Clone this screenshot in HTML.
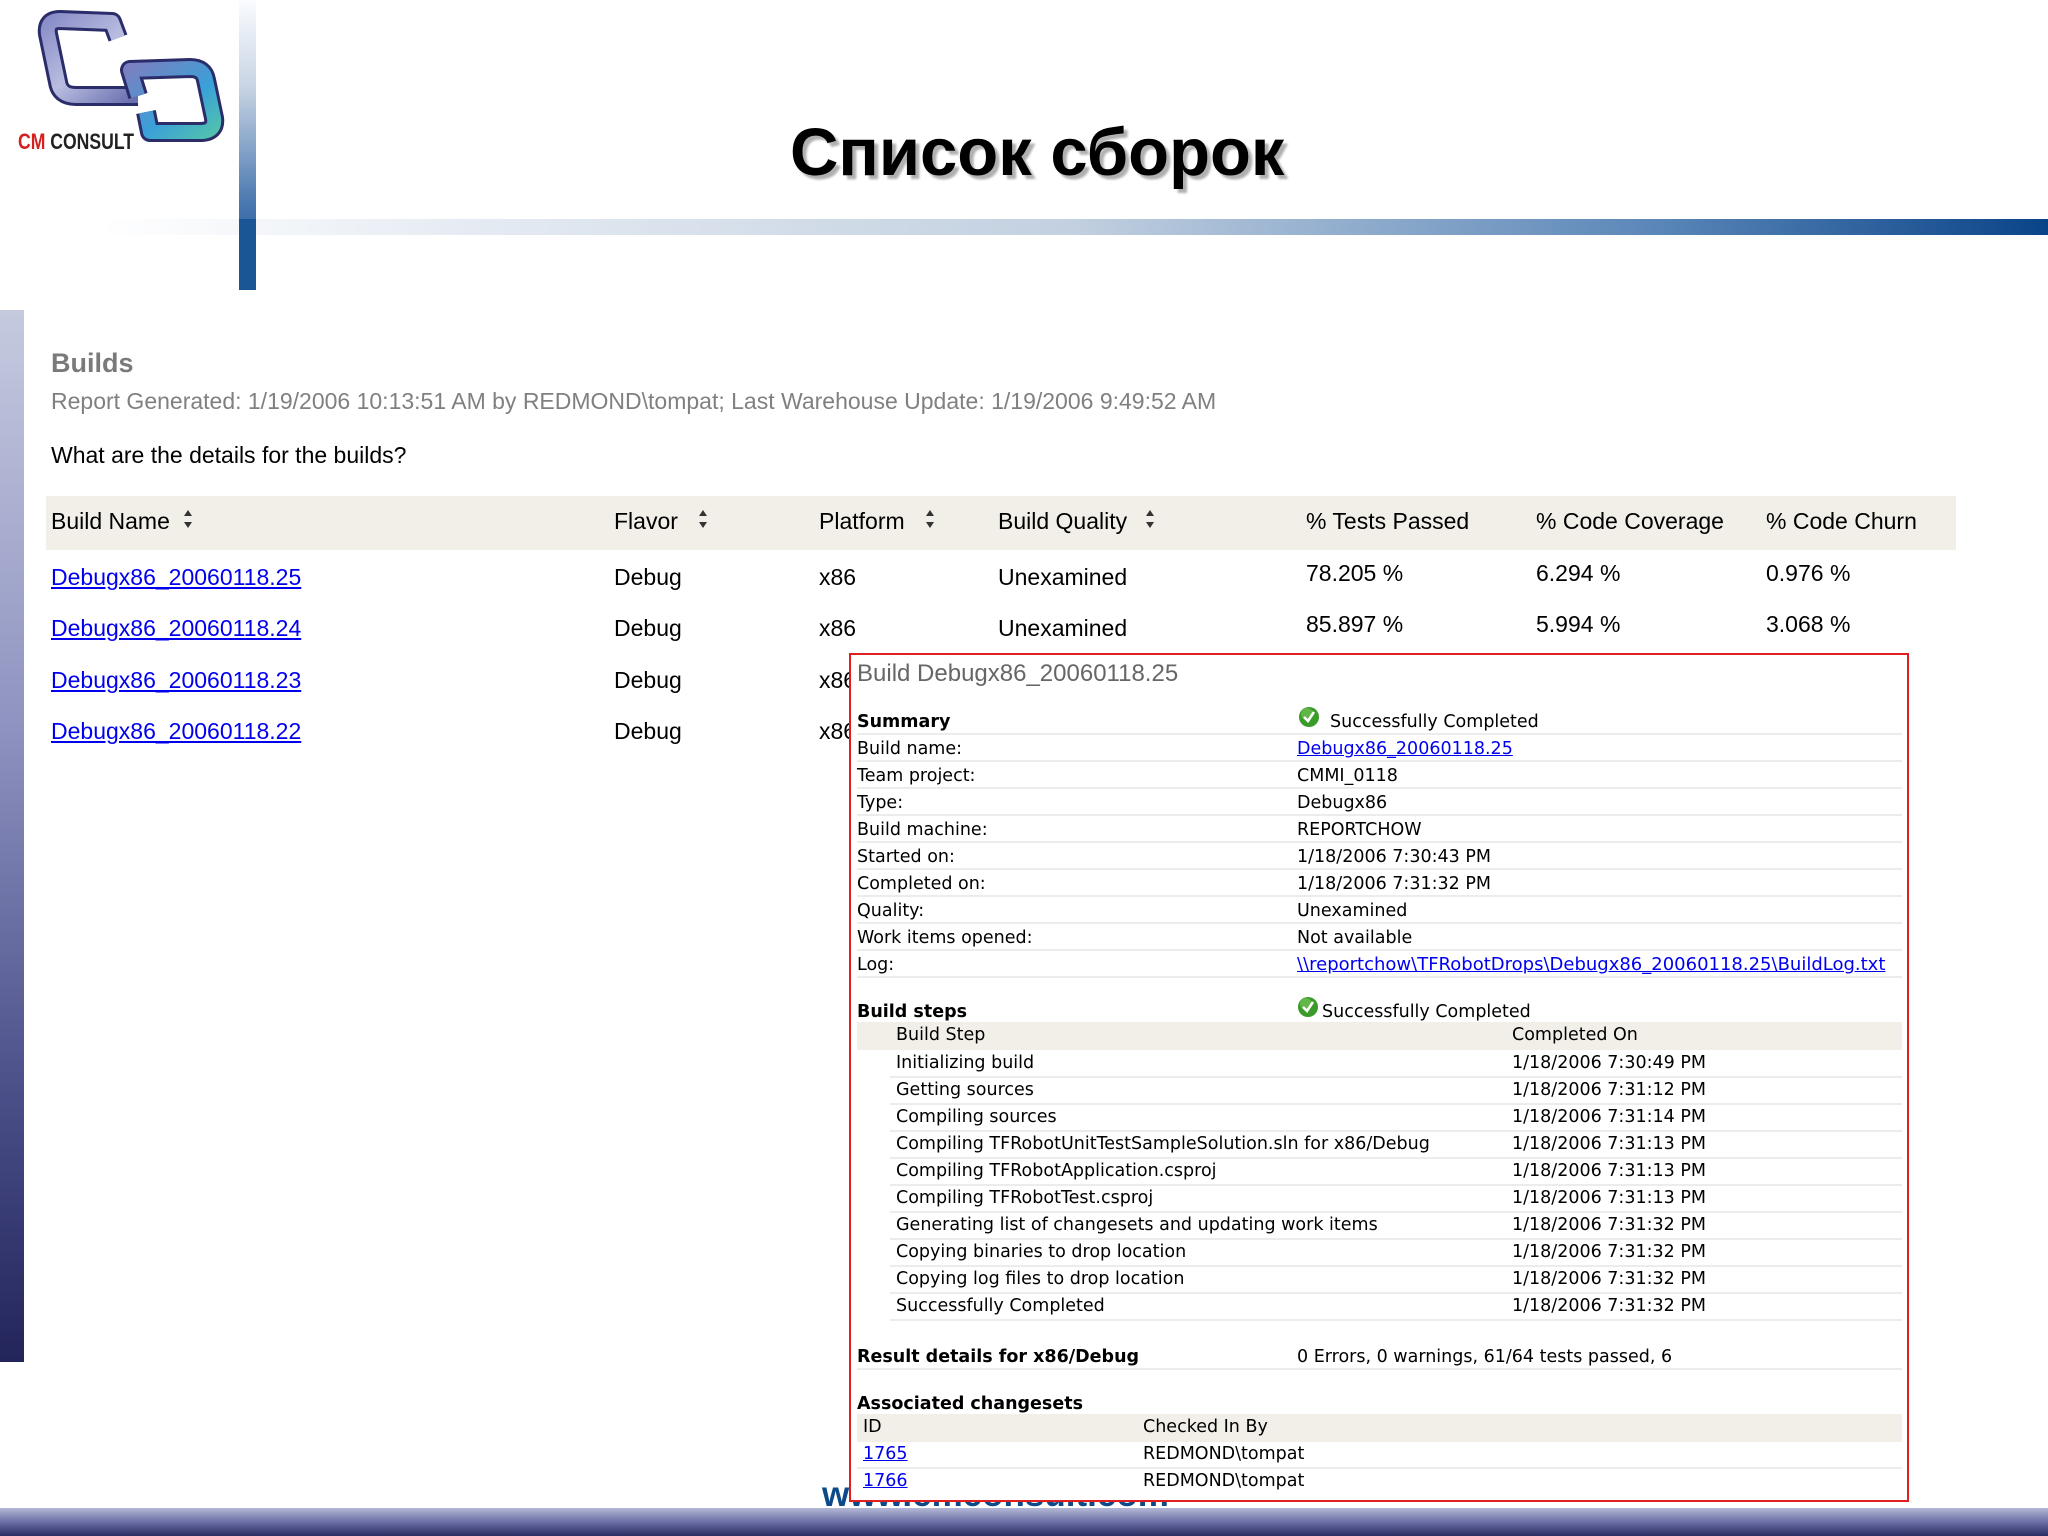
<!DOCTYPE html>
<html><head><meta charset="utf-8">
<style>
html,body{margin:0;padding:0}
body{width:2048px;height:1536px;position:relative;overflow:hidden;background:#fff;font-family:"Liberation Sans",sans-serif}
.a{position:absolute;white-space:nowrap}
.t{font-size:23px;color:#000;line-height:30px}
.lnk{color:#0000ee;text-decoration:underline}
.p{font-family:"DejaVu Sans",sans-serif;font-size:17.5px;line-height:22px;color:#000}
.p .lnk{color:#0000ee}
.sep{position:absolute;height:2px;background:#ececec}
.arr{position:absolute;width:10px;height:22px}
</style></head><body>

<svg class="a" style="left:0;top:0" width="240" height="170" viewBox="0 0 240 170">
<defs>
<linearGradient id="g1" x1="0" y1="0" x2="1" y2="1"><stop offset="0" stop-color="#8a8ec8"/><stop offset="0.5" stop-color="#b9bde0"/><stop offset="1" stop-color="#6a6fb0"/></linearGradient>
<linearGradient id="g2" x1="0" y1="0" x2="1" y2="1"><stop offset="0" stop-color="#7a80c0"/><stop offset="0.6" stop-color="#3aa0d8"/><stop offset="1" stop-color="#50c0b0"/></linearGradient>
</defs>
<path d="M118 38 L112 22 L60 20 Q46 20 48 34 L58 82 Q60 96 76 96 L138 96" fill="none" stroke="#2a2d6a" stroke-width="20" stroke-linejoin="round"/>
<path d="M118 38 L112 22 L60 20 Q46 20 48 34 L58 82 Q60 96 76 96 L138 96" fill="none" stroke="url(#g1)" stroke-width="14" stroke-linejoin="round"/>
<path d="M138 96 L130 70 L190 68 Q204 68 206 80 L214 118 Q216 132 200 132 L150 132 L146 112" fill="none" stroke="#2a2d6a" stroke-width="20" stroke-linejoin="round"/>
<path d="M138 96 L130 70 L190 68 Q204 68 206 80 L214 118 Q216 132 200 132 L150 132 L146 112" fill="none" stroke="url(#g2)" stroke-width="14" stroke-linejoin="round"/>
</svg>
<div class="a" style="left:18px;top:130px;font-size:22px;font-weight:bold;line-height:24px;transform:scaleX(0.8);transform-origin:left"><span style="color:#d42020">CM</span> <span style="color:#222">CONSULT</span></div>

<div class="a" style="left:239px;top:0;width:17px;height:290px;background:linear-gradient(#fafcfe,#c8d4e4 30%,#4a78b0 70%,#0f4a90)"></div>
<div class="a" style="left:100px;top:219px;width:1948px;height:16px;background:linear-gradient(90deg,#ffffff,#e4eaf2 20%,#c2d0e0 50%,#5a86b8 80%,#0a4488)"></div>
<div class="a" style="left:239px;top:219px;width:17px;height:71px;background:#1a5596"></div>

<div class="a" style="left:790px;top:115px;font-size:67px;font-weight:bold;line-height:76px;color:#000;text-shadow:4px 4px 2px #b0b0b0">Список сборок</div>

<div class="a" style="left:0;top:310px;width:24px;height:1052px;background:linear-gradient(#c6cadf,#8d92c0 40%,#4a4e88 75%,#22245a)"></div>

<div class="a" style="left:51px;top:346px;font-size:27px;font-weight:bold;color:#7a7a7a;line-height:34px">Builds</div>
<div class="a" style="left:51px;top:387px;font-size:23px;color:#808080;line-height:28px">Report Generated: 1/19/2006 10:13:51 AM by REDMOND\tompat; Last Warehouse Update: 1/19/2006 9:49:52 AM</div>
<div class="a t" style="left:51px;top:440px">What are the details for the builds?</div>

<div class="a" style="left:46px;top:496px;width:1910px;height:54px;background:#f1efe7"></div>
<div class="a t" style="left:51px;top:506px">Build Name</div>
<div class="a t" style="left:614px;top:506px">Flavor</div>
<div class="a t" style="left:819px;top:506px">Platform</div>
<div class="a t" style="left:998px;top:506px">Build Quality</div>
<div class="a t" style="left:1306px;top:506px">% Tests Passed</div>
<div class="a t" style="left:1536px;top:506px">% Code Coverage</div>
<div class="a t" style="left:1766px;top:506px">% Code Churn</div>
<svg class="arr" style="left:183px;top:508px" viewBox="0 0 10 22"><path d="M5 2 L9 8 L1 8Z M5 20 L9 14 L1 14Z" fill="#333"/></svg>
<svg class="arr" style="left:698px;top:508px" viewBox="0 0 10 22"><path d="M5 2 L9 8 L1 8Z M5 20 L9 14 L1 14Z" fill="#333"/></svg>
<svg class="arr" style="left:925px;top:508px" viewBox="0 0 10 22"><path d="M5 2 L9 8 L1 8Z M5 20 L9 14 L1 14Z" fill="#333"/></svg>
<svg class="arr" style="left:1145px;top:508px" viewBox="0 0 10 22"><path d="M5 2 L9 8 L1 8Z M5 20 L9 14 L1 14Z" fill="#333"/></svg>

<div class="a t lnk" style="left:51px;top:562px">Debugx86_20060118.25</div>
<div class="a t lnk" style="left:51px;top:613px">Debugx86_20060118.24</div>
<div class="a t lnk" style="left:51px;top:665px">Debugx86_20060118.23</div>
<div class="a t lnk" style="left:51px;top:716px">Debugx86_20060118.22</div>
<div class="a t" style="left:614px;top:562px">Debug</div>
<div class="a t" style="left:614px;top:613px">Debug</div>
<div class="a t" style="left:614px;top:665px">Debug</div>
<div class="a t" style="left:614px;top:716px">Debug</div>
<div class="a t" style="left:819px;top:562px">x86</div>
<div class="a t" style="left:819px;top:613px">x86</div>
<div class="a t" style="left:819px;top:665px">x86</div>
<div class="a t" style="left:819px;top:716px">x86</div>
<div class="a t" style="left:998px;top:562px">Unexamined</div>
<div class="a t" style="left:998px;top:613px">Unexamined</div>
<div class="a t" style="left:1306px;top:558px">78.205 %</div>
<div class="a t" style="left:1536px;top:558px">6.294 %</div>
<div class="a t" style="left:1766px;top:558px">0.976 %</div>
<div class="a t" style="left:1306px;top:609px">85.897 %</div>
<div class="a t" style="left:1536px;top:609px">5.994 %</div>
<div class="a t" style="left:1766px;top:609px">3.068 %</div>

<div class="a" style="left:822px;top:1474px;font-size:35px;font-weight:bold;color:#0d4a8a;line-height:42px">www.cmconsult.com</div>

<div class="a" style="left:0;top:1508px;width:2048px;height:28px;background:linear-gradient(#b4b8d6,#6a6ea4 50%,#2a2c62)"></div>

<div class="a" style="left:849px;top:653px;width:1056px;height:845px;border:2px solid #e02020;background:#fff"></div>
<div class="a" style="left:857px;top:659px;font-size:24px;color:#666;line-height:30px">Build Debugx86_20060118.25</div>

<div class="a p" style="left:857px;top:711px;font-weight:bold">Summary</div>
<svg class="a" style="left:1298px;top:706px" width="22" height="22" viewBox="0 0 22 22"><circle cx="11" cy="11" r="10" fill="#3a9a2a"/><circle cx="9" cy="8" r="6" fill="#7ccc5c" opacity=".6"/><path d="M6 11 L10 15 L16 6" fill="none" stroke="#fff" stroke-width="2.5"/></svg>
<div class="a p" style="left:1330px;top:711px">Successfully Completed</div>

<div class="a p" style="left:857px;top:738px">Build name:</div><div class="a p" style="left:1297px;top:738px"><span class="lnk">Debugx86_20060118.25</span></div>
<div class="a p" style="left:857px;top:765px">Team project:</div><div class="a p" style="left:1297px;top:765px">CMMI_0118</div>
<div class="a p" style="left:857px;top:792px">Type:</div><div class="a p" style="left:1297px;top:792px">Debugx86</div>
<div class="a p" style="left:857px;top:819px">Build machine:</div><div class="a p" style="left:1297px;top:819px">REPORTCHOW</div>
<div class="a p" style="left:857px;top:846px">Started on:</div><div class="a p" style="left:1297px;top:846px">1/18/2006 7:30:43 PM</div>
<div class="a p" style="left:857px;top:873px">Completed on:</div><div class="a p" style="left:1297px;top:873px">1/18/2006 7:31:32 PM</div>
<div class="a p" style="left:857px;top:900px">Quality:</div><div class="a p" style="left:1297px;top:900px">Unexamined</div>
<div class="a p" style="left:857px;top:927px">Work items opened:</div><div class="a p" style="left:1297px;top:927px">Not available</div>
<div class="a p" style="left:857px;top:954px">Log:</div><div class="a p" style="left:1297px;top:954px;font-size:18px"><span class="lnk">\\reportchow\TFRobotDrops\Debugx86_20060118.25\BuildLog.txt</span></div>
<div class="sep" style="left:857px;top:733px;width:1045px"></div>
<div class="sep" style="left:857px;top:760px;width:1045px"></div>
<div class="sep" style="left:857px;top:787px;width:1045px"></div>
<div class="sep" style="left:857px;top:814px;width:1045px"></div>
<div class="sep" style="left:857px;top:841px;width:1045px"></div>
<div class="sep" style="left:857px;top:868px;width:1045px"></div>
<div class="sep" style="left:857px;top:895px;width:1045px"></div>
<div class="sep" style="left:857px;top:922px;width:1045px"></div>
<div class="sep" style="left:857px;top:949px;width:1045px"></div>
<div class="sep" style="left:857px;top:976px;width:1045px"></div>

<div class="a p" style="left:857px;top:1001px;font-weight:bold">Build steps</div>
<svg class="a" style="left:1297px;top:996px" width="22" height="22" viewBox="0 0 22 22"><circle cx="11" cy="11" r="10" fill="#3a9a2a"/><circle cx="9" cy="8" r="6" fill="#7ccc5c" opacity=".6"/><path d="M6 11 L10 15 L16 6" fill="none" stroke="#fff" stroke-width="2.5"/></svg>
<div class="a p" style="left:1322px;top:1001px">Successfully Completed</div>
<div class="a" style="left:857px;top:1022px;width:1045px;height:28px;background:#f1efe7"></div>
<div class="a p" style="left:896px;top:1024px">Build Step</div>
<div class="a p" style="left:1512px;top:1024px">Completed On</div>

<div class="a p" style="left:896px;top:1050px;line-height:27px">Initializing build<br>Getting sources<br>Compiling sources<br>Compiling TFRobotUnitTestSampleSolution.sln for x86/Debug<br>Compiling TFRobotApplication.csproj<br>Compiling TFRobotTest.csproj<br>Generating list of changesets and updating work items<br>Copying binaries to drop location<br>Copying log files to drop location<br>Successfully Completed</div>
<div class="a p" style="left:1512px;top:1050px;line-height:27px">1/18/2006 7:30:49 PM<br>1/18/2006 7:31:12 PM<br>1/18/2006 7:31:14 PM<br>1/18/2006 7:31:13 PM<br>1/18/2006 7:31:13 PM<br>1/18/2006 7:31:13 PM<br>1/18/2006 7:31:32 PM<br>1/18/2006 7:31:32 PM<br>1/18/2006 7:31:32 PM<br>1/18/2006 7:31:32 PM</div>
<div class="sep" style="left:890px;top:1076px;width:1012px"></div>
<div class="sep" style="left:890px;top:1103px;width:1012px"></div>
<div class="sep" style="left:890px;top:1130px;width:1012px"></div>
<div class="sep" style="left:890px;top:1157px;width:1012px"></div>
<div class="sep" style="left:890px;top:1184px;width:1012px"></div>
<div class="sep" style="left:890px;top:1211px;width:1012px"></div>
<div class="sep" style="left:890px;top:1238px;width:1012px"></div>
<div class="sep" style="left:890px;top:1265px;width:1012px"></div>
<div class="sep" style="left:890px;top:1292px;width:1012px"></div>
<div class="sep" style="left:890px;top:1319px;width:1012px"></div>

<div class="a p" style="left:857px;top:1346px;font-weight:bold">Result details for x86/Debug</div>
<div class="a p" style="left:1297px;top:1346px">0 Errors, 0 warnings, 61/64 tests passed, 6</div>
<div class="sep" style="left:857px;top:1368px;width:1045px"></div>

<div class="a p" style="left:857px;top:1393px;font-weight:bold">Associated changesets</div>
<div class="a" style="left:857px;top:1414px;width:1045px;height:28px;background:#f1efe7"></div>
<div class="a p" style="left:863px;top:1416px">ID</div>
<div class="a p" style="left:1143px;top:1416px">Checked In By</div>
<div class="a p" style="left:863px;top:1443px"><span class="lnk">1765</span></div>
<div class="a p" style="left:1143px;top:1443px">REDMOND\tompat</div>
<div class="sep" style="left:857px;top:1467px;width:1045px"></div>
<div class="a p" style="left:863px;top:1470px"><span class="lnk">1766</span></div>
<div class="a p" style="left:1143px;top:1470px">REDMOND\tompat</div>
</body></html>
